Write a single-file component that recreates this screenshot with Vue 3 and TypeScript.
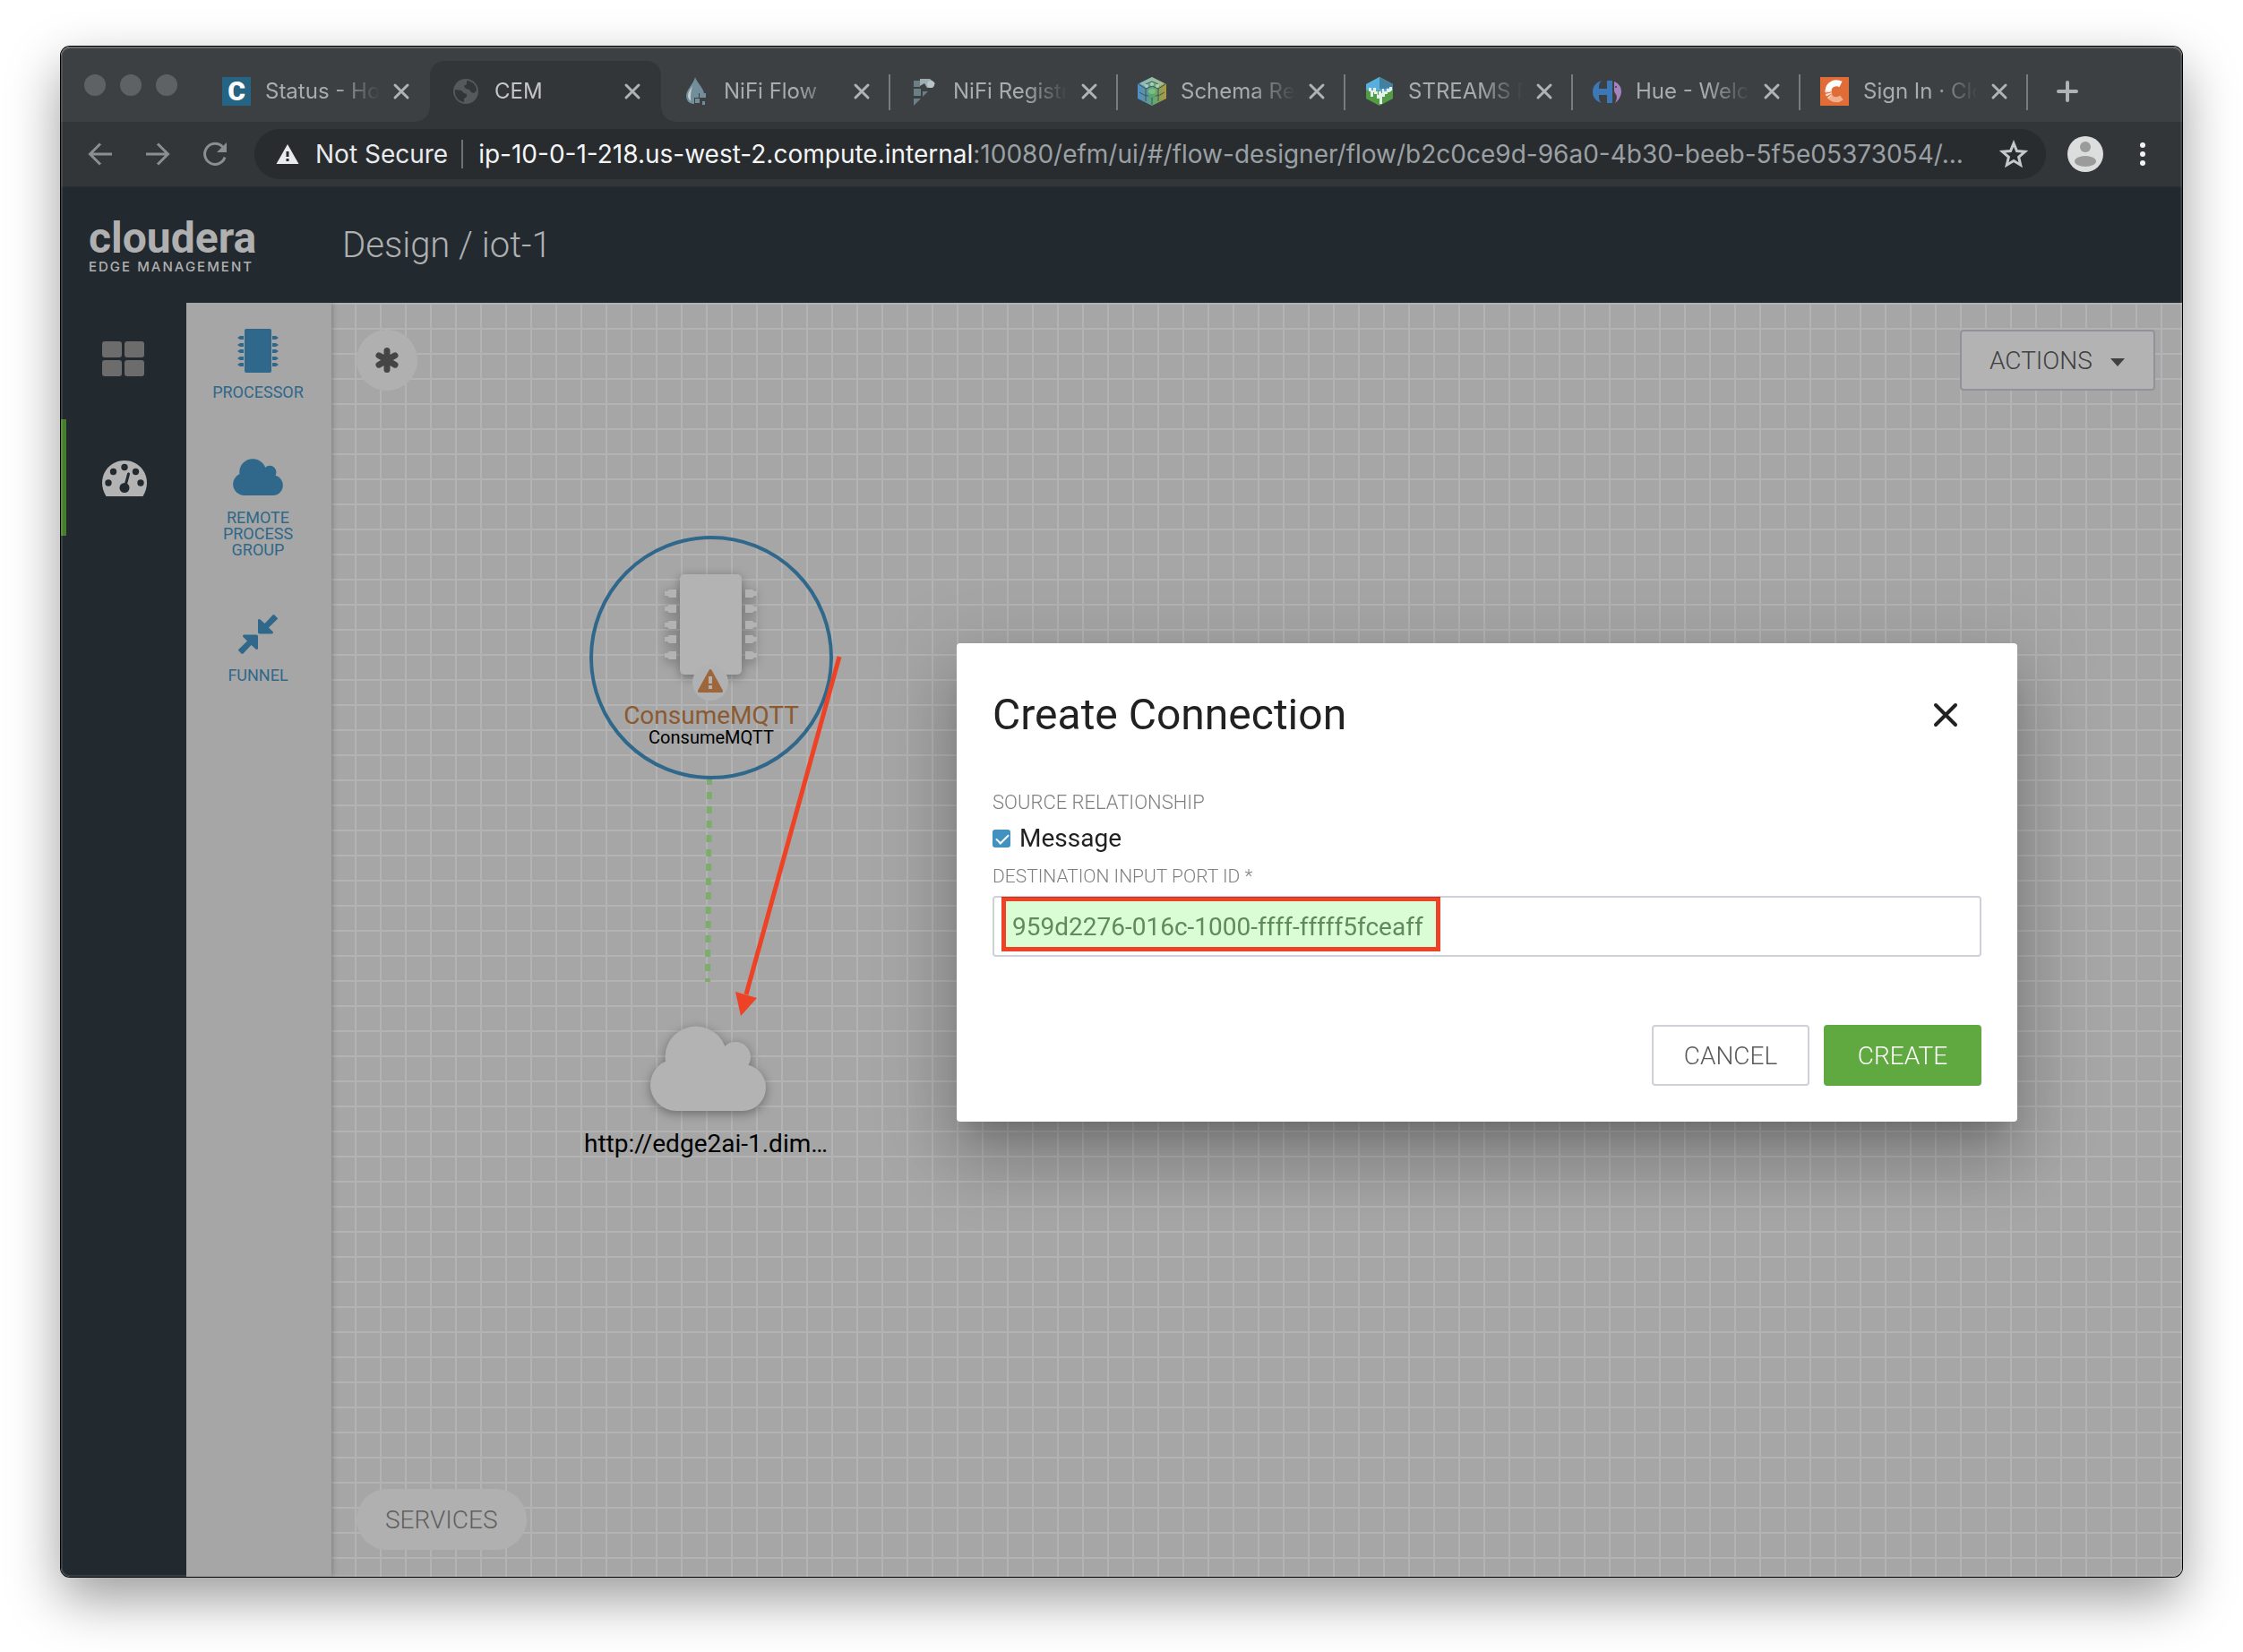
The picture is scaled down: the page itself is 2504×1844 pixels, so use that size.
<script setup lang="ts">
import { ref } from 'vue'

interface Tab {
  id: string
  title: string
  active?: boolean
}

const tabs: Tab[] = [
  { id: 'status', title: 'Status - Home' },
  { id: 'cem', title: 'CEM', active: true },
  { id: 'nifi', title: 'NiFi Flow' },
  { id: 'registry', title: 'NiFi Registry' },
  { id: 'schema', title: 'Schema Registry' },
  { id: 'streams', title: 'STREAMS Messaging' },
  { id: 'hue', title: 'Hue - Welcome' },
  { id: 'signin', title: 'Sign In · Cloudera' },
]

const pinRows = [320, 337, 355, 371, 389]
const smallPins = [8, 16, 23, 31, 38]

const messageChecked = ref(true)
const portId = ref('959d2276-016c-1000-ffff-fffff5fceaff')
</script>

<template>
  <div class="desktop">
    <div class="window">
      <div class="tab-strip">
        <div class="lights"><i></i><i></i><i></i></div>
        <div v-for="tab in tabs" :key="tab.id" class="tab" :class="{ active: tab.active }">
          <span class="favicon">
            <span v-if="tab.id === 'status'" class="letter-icon">C</span>
            <svg v-else-if="tab.id === 'cem'" viewBox="0 0 32 32">
              <circle cx="16" cy="16" r="14" fill="#54595d" />
              <path d="M17 4c6 0 11 5 11 11l-3 3-3-1-2-3-4-1-2-3 3-2zM4 14l7 1 3 3 3 1v3l-3 2v4C8 27 4 22 4 17z" fill="#323639" />
            </svg>
            <svg v-else-if="tab.id === 'nifi'" viewBox="0 0 32 32">
              <path d="M16 0c2 6 9 12 10 18h-6v5h-5v7C9 30 6 26 6 21 6 14 14 8 16 0z" fill="#728e9b" />
              <path d="M15 6c-2 6-7 9-7 15 0 2 1 4 3 6 0-8 0-13 4-21z" fill="#c3ccd1" />
              <path d="M21 18h7v5h-7zM16 24h5v5h-5zM24 27h3v4h-3z" fill="#728e9b" />
            </svg>
            <svg v-else-if="tab.id === 'registry'" viewBox="0 0 32 32">
              <path d="M4 4h7v7H4zM4 13h8v8H4zM4 24h8l-8 8zM14 16h6l-6 6z" fill="#6a7f86" />
              <path d="M11 2h11l6 5-3 5h-6l-3-5-5 3z" fill="#9eadb2" />
              <circle cx="23" cy="8" r="4" fill="#b9c4c8" />
            </svg>
            <svg v-else-if="tab.id === 'schema'" viewBox="0 0 32 32">
              <defs>
                <linearGradient id="hive" x1="0" x2="1" y1="0" y2="0">
                  <stop offset="0" stop-color="#4f8fc9" />
                  <stop offset="0.3" stop-color="#5b95a0" />
                  <stop offset="0.55" stop-color="#5fa873" />
                  <stop offset="0.75" stop-color="#86a05a" />
                  <stop offset="1" stop-color="#b3993c" />
                </linearGradient>
              </defs>
              <path d="M16 0l16 8v16l-16 8-16-8V8z" fill="url(#hive)" />
              <path d="M16 0l14 7-5 3-9-4-9 4-5-3z" fill="#a9c9b6" opacity="0.7" />
              <path d="M1 8l8 5v14M31 8l-8 5v14M9 13l7-3 7 3M9 20l7 3 7-3M2 17l7 4M30 17l-7 4M9 8l7-3 7 3M16 23v8" fill="none" stroke="#3a5558" stroke-width="1" />
              <g fill="#c4dfce" opacity="0.75">
                <circle cx="16" cy="8" r="2" /><circle cx="10" cy="10" r="2" /><circle cx="22" cy="10" r="2" />
              </g>
              <ellipse cx="16" cy="16" rx="4" ry="3" fill="#77bd86" /><ellipse cx="16" cy="21" rx="4" ry="2" fill="#57a56c" />
            </svg>
            <svg v-else-if="tab.id === 'streams'" viewBox="0 0 32 32">
              <path d="M16 0l15 8v16l-15 8-15-8V8z" fill="#539c46" />
              <path d="M16 0l15 8v6l-5 1-4 2-7-2-7 2-7-3V8z" fill="#58afdf" />
              <path d="M16 0l15 8v5l-6-1-4 2-5-1z" fill="#437f9f" />
              <path d="M4 12h3v3h2v-3h3v4h2v4h1v-4h3v2h1v-5h2v3h3v-3h3v-2h3v4l-3 2h-2v2h-3v3h-3v8h-3v-6h-3v-5h-3v-2H9v5H6v-6H4z" fill="#e4f0ea" />
            </svg>
            <svg v-else-if="tab.id === 'hue'" viewBox="0 0 32 32">
              <path d="M10 4C3 6 0 11 0 16.500S3 27 10 29c-3-3-3-5-3-9h9v9h6V4h-6v9H7c0-4 0-6 3-9z" fill="#3c78b8" />
              <path d="M24 5c5 2 8 6 8 11s-3 10-7 13c2-4 3-8 0-11l-1-2z" fill="#a583bd" />
              <circle cx="26" cy="11" r="1" fill="#3c4043" />
            </svg>
            <svg v-else viewBox="0 0 32 32">
              <rect width="32" height="32" fill="#e06c37" />
              <path d="M23 8C17 5 9 8 9 16" fill="none" stroke="#fff" stroke-width="7" />
              <path d="M9 15c0 3 1 6 3 7" fill="none" stroke="#fbe3d6" stroke-width="7" stroke-dasharray="2 1" />
              <path d="M11 22c3 4 9 4 13 1" fill="none" stroke="#f1b08d" stroke-width="6" />
            </svg>
          </span>
          <span class="tab-title">{{ tab.title }}</span>
          <button class="tab-close" :aria-label="`Close ${tab.title}`">
            <svg viewBox="0 0 24 24"><path d="M5 5l14 14M19 5L5 19" /></svg>
          </button>
        </div>
        <button class="new-tab" aria-label="New tab">
          <svg viewBox="0 0 28 28"><path d="M14 4v20M4 14h20" /></svg>
        </button>
      </div>

      <div class="toolbar">
        <button class="tool-icon" aria-label="Back">
          <svg viewBox="0 0 32 32"><path d="M29 16H5M16 4.500L4.500 16 16 27.500" /></svg>
        </button>
        <button class="tool-icon" aria-label="Forward">
          <svg viewBox="0 0 32 32"><path d="M3 16h24M16 4.500L27.500 16 16 27.500" /></svg>
        </button>
        <button class="tool-icon" aria-label="Reload">
          <svg viewBox="0 0 32 32">
            <path d="M27 19.500A11.500 11.500 0 1 1 24.500 8" />
            <path d="M29 3v11H18z" class="solid" />
          </svg>
        </button>
        <div class="address">
          <svg class="warn" viewBox="0 0 26 24">
            <path d="M13 1l12.500 22H.5z" fill="#e8eaed" />
            <path d="M13 9v6M13 17v3" stroke="#292c2f" stroke-width="3" />
          </svg>
          <span class="secure">Not Secure</span>
          <span class="divider"></span>
          <span class="url"><b>ip-10-0-1-218.us-west-2.compute.internal</b>:10080/efm/ui/#/flow-designer/flow/b2c0ce9d-96a0-4b30-beeb-5f5e05373054/...</span>
          <button class="star" aria-label="Bookmark">
            <svg viewBox="0 0 32 32"><path d="M16 4l3.500 8.500 9 .8-6.900 6 2.100 8.900L16 23.500l-7.700 4.700 2.100-8.900-6.900-6 9-.8z" /></svg>
          </button>
        </div>
        <button class="avatar" aria-label="Profile">
          <svg viewBox="0 0 40 40">
            <circle cx="20" cy="20" r="20" fill="#dcdddd" />
            <circle cx="20" cy="12" r="6" fill="#9b9b9b" />
            <ellipse cx="20" cy="28" rx="12" ry="6" fill="#9b9b9b" />
          </svg>
        </button>
        <button class="kebab" aria-label="Menu">
          <svg viewBox="0 0 8 28"><circle cx="4" cy="4" r="3" /><circle cx="4" cy="14" r="3" /><circle cx="4" cy="24" r="3" /></svg>
        </button>
      </div>

      <header class="app-header">
        <div class="brand">
          <span class="brand-name">cloudera</span>
          <span class="brand-sub">EDGE MANAGEMENT</span>
        </div>
        <h1>Design / iot-1</h1>
      </header>

      <div class="body">
        <nav class="side-nav">
          <a href="#" class="nav-item" aria-label="Dashboard">
            <svg width="48" height="40" viewBox="0 0 48 40" fill="#6c6c6c">
              <rect x="0" y="0" width="22" height="18" rx="3" /><rect x="25" y="0" width="22" height="18" rx="3" />
              <rect x="0" y="21" width="22" height="18" rx="3" /><rect x="25" y="21" width="22" height="18" rx="3" />
            </svg>
          </a>
          <a href="#" class="nav-item current" aria-label="Designer">
            <svg width="50" height="40" viewBox="0 0 50 40">
              <path d="M25 0C11 0 0 11 0 25c0 5 1.500 10 4.500 15h41C48.500 35 50 30 50 25 50 11 39 0 25 0z" fill="#b3b3b3" />
              <g fill="#222a30">
                <circle cx="7" cy="25" r="3.700" /><circle cx="12.500" cy="12.500" r="3.700" /><circle cx="25" cy="7.500" r="3.700" />
                <circle cx="37.500" cy="12.500" r="3.700" /><circle cx="43" cy="25" r="3.700" /><circle cx="25" cy="30.500" r="5.500" />
              </g>
              <path d="M26 28l3.500-13" stroke="#222a30" stroke-width="3" stroke-linecap="round" />
            </svg>
          </a>
        </nav>

        <aside class="palette">
          <button class="tool">
            <span class="tool-art">
              <svg width="46" height="50" viewBox="0 0 46 50" fill="#2f688a">
                <rect x="8" y="0" width="30" height="49" rx="2" />
                <path v-for="y in smallPins" :key="y" :d="`M7 ${y}H3L0 ${y + 2}l3 2h4zM39 ${y}h4l3 2-3 2h-4z`" />
              </svg>
            </span>
            <span>PROCESSOR</span>
          </button>
          <button class="tool">
            <span class="tool-art">
              <svg width="56" height="41" viewBox="0 0 129 95" fill="#2f688a">
                <circle cx="51" cy="35" r="34.500" /><circle cx="29" cy="66" r="29" /><circle cx="95" cy="35" r="17" />
                <circle cx="103" cy="69" r="26" /><rect x="29" y="40" width="74" height="55" />
              </svg>
            </span>
            <span>REMOTE PROCESS GROUP</span>
          </button>
          <button class="tool">
            <span class="tool-art">
              <svg width="44" height="44" viewBox="0 0 44 44" fill="#2f688a">
                <path d="M22 6.500c0-1.500 1.500-2 2.500-1l5 4.500 9-9.500c.8-.8 1.500-.5 2 0l3 3c.6.600.6 1.200 0 1.800l-9.500 9.200 4.500 4.500c1 1 .3 2.500-1 2.500H24c-1.300 0-2-.7-2-2z" />
                <path d="M22 37.500c0 1.500-1.500 2-2.500 1l-5-4.500-9 9.500c-.8.800-1.500.5-2 0l-3-3c-.6-.6-.6-1.200 0-1.800L10 29.500 5.500 25c-1-1-.3-2.500 1-2.500H20c1.300 0 2 .7 2 2z" />
              </svg>
            </span>
            <span>FUNNEL</span>
          </button>
        </aside>

        <main class="canvas">
          <svg class="diagram">
            <line x1="422" y1="530" x2="420" y2="758" stroke="#7eac6e" stroke-width="6" stroke-dasharray="8 8" />
            <circle cx="424" cy="396" r="134" fill="none" stroke="#2f688a" stroke-width="4" />
            <g class="raised">
              <rect x="389" y="303" width="69" height="112" rx="5" />
              <path v-for="y in pinRows" :key="y" :d="`M385 ${y}h-8l-2 2h-3v5h3l2 2h8zM462 ${y}h8l2 2h3v5h-3l-2 2h-8z`" />
            </g>
            <circle cx="423" cy="424" r="20" fill="#afb1b2" />
            <path d="M421.500 410c.8-1.300 2.200-1.300 3 0l12.300 22.500c.7 1.300 0 2.500-1.500 2.500h-24.600c-1.500 0-2.200-1.200-1.500-2.500z" fill="#9f663a" />
            <path d="M423 417v8M423 427v4" stroke="#b3b3b3" stroke-width="4" />
            <text x="424" y="470" class="node-title warn-text">ConsumeMQTT</text>
            <text x="424" y="492" class="node-type">ConsumeMQTT</text>

            <g class="raised">
              <circle cx="407" cy="842" r="34.500" /><circle cx="385" cy="873" r="29" /><circle cx="451" cy="842" r="17" />
              <circle cx="459" cy="876" r="26" /><rect x="385" y="847" width="74" height="55" />
            </g>
            <text x="418" y="948" class="node-title">http://edge2ai-1.dim…</text>

            <path d="M567 395L463 772" stroke="#ee4226" stroke-width="5" />
            <path d="M457 796l-6-27 24 7z" fill="#ee4226" />
          </svg>

          <div class="canvas-row">
            <button class="round" aria-label="Configuration">
              <svg width="28" height="28" viewBox="0 0 28 28"><path d="M14 3.500v21M5 8.800l18 10.400M23 8.800L5 19.200" /></svg>
            </button>
            <button class="btn actions">ACTIONS<i class="caret"></i></button>
          </div>
          <button class="services">SERVICES</button>
        </main>
      </div>

      <form class="dialog" role="dialog" aria-labelledby="dialog-title" @submit.prevent>
        <div class="dialog-head">
          <h2 id="dialog-title">Create Connection</h2>
          <button type="button" class="dialog-close" aria-label="Close">
            <svg width="30" height="30" viewBox="0 0 30 30"><path d="M4 4l22 22M26 4L4 26" /></svg>
          </button>
        </div>
        <span class="field-label">SOURCE RELATIONSHIP</span>
        <label class="check"><input v-model="messageChecked" type="checkbox" />Message</label>
        <label class="field-label port-label" for="port">DESTINATION INPUT PORT ID *</label>
        <div class="field">
          <input id="port" v-model="portId" type="text" />
          <span class="marker"></span>
        </div>
        <div class="dialog-foot">
          <button type="button" class="btn">CANCEL</button>
          <button type="submit" class="btn primary">CREATE</button>
        </div>
      </form>
    </div>
  </div>
</template>

<style>
body {
  margin: 0;
  background: #fff;
}
</style>

<style scoped>
* {
  box-sizing: border-box;
}
button {
  margin: 0;
  padding: 0;
  border: 0;
  background: none;
  font: inherit;
  color: inherit;
  cursor: pointer;
}
svg {
  display: block;
}
.desktop {
  display: flex;
  min-height: 100vh;
  padding: 52px 68px 84px;
  font-family: Roboto, "Liberation Sans", sans-serif;
}
.window {
  position: relative;
  flex: 1;
  min-width: 0;
  display: flex;
  flex-direction: column;
  border-radius: 10px;
  box-shadow: 0 0 0 1px #000, 0 24px 60px rgba(0, 0, 0, 0.4);
}
.window::after {
  content: "";
  position: absolute;
  inset: 0;
  border-radius: 10px;
  box-shadow: inset 0 0 0 2px rgba(255, 255, 255, 0.1), inset 0 2px 0 rgba(255, 255, 255, 0.14);
  pointer-events: none;
}

/* Browser chrome */
.tab-strip {
  display: flex;
  align-items: flex-end;
  height: 84px;
  background: #3c4043;
  border-radius: 10px 10px 0 0;
  font: 400 24px Inter, "Liberation Sans", sans-serif;
  color: #a9acae;
}
.lights {
  display: flex;
  gap: 16px;
  width: 158px;
  padding-left: 26px;
  align-self: flex-start;
  margin-top: 31px;
}
.lights i {
  width: 24px;
  height: 24px;
  border-radius: 50%;
  background: #5e6265;
}
.tab {
  position: relative;
  display: flex;
  align-items: center;
  width: 254px;
  height: 68px;
  padding: 0 20px 0 22px;
}
.tab.active {
  width: 258px;
  padding-left: 24px;
  background: #323639;
  border-radius: 16px 16px 0 0;
  color: #c3c5c7;
}
.tab.active + .tab {
  width: 256px;
}
.tab.active ~ .tab::after {
  content: "";
  position: absolute;
  right: 0;
  top: 15px;
  width: 2px;
  height: 40px;
  background: #797c7e;
}
.tab.active::before,
.tab.active::after {
  content: "";
  position: absolute;
  bottom: 0;
  width: 16px;
  height: 16px;
}
.tab.active::before {
  right: 100%;
  background: radial-gradient(circle at 0 0, #3c4043 15px, #323639 16px);
}
.tab.active::after {
  left: 100%;
  background: radial-gradient(circle at 100% 0, #3c4043 15px, #323639 16px);
}
.favicon {
  flex: none;
  width: 32px;
  height: 32px;
  margin-right: 16px;
}
.letter-icon {
  display: block;
  background: #256482;
  color: #fff;
  font: 900 30px/32px Roboto, sans-serif;
  text-align: center;
}
.tab-title {
  flex: 1;
  min-width: 0;
  margin-right: 12px;
  overflow: hidden;
  white-space: nowrap;
  line-height: 32px;
  mask-image: linear-gradient(to right, #000 calc(100% - 48px), transparent 100%);
}
.tab-close svg {
  width: 24px;
  height: 24px;
}
.tab-close path,
.new-tab path {
  fill: none;
  stroke: #b0b3b5;
  stroke-width: 3;
  stroke-linecap: round;
}
.new-tab {
  align-self: center;
  margin: 16px 0 0 30px;
}
.new-tab svg {
  width: 28px;
  height: 28px;
}
.new-tab path {
  stroke-width: 4;
}
.toolbar {
  display: flex;
  align-items: center;
  height: 73px;
  padding: 0 40px 0 28px;
  background: #323639;
  border-bottom: 1px solid #2a2e31;
}
.tool-icon {
  margin-right: 32px;
}
.tool-icon svg,
.star svg {
  width: 32px;
  height: 32px;
}
.tool-icon path {
  fill: none;
  stroke: #8b8e90;
  stroke-width: 3;
}
.tool-icon .solid {
  fill: #8b8e90;
  stroke: none;
}
.address {
  flex: 1;
  min-width: 0;
  display: flex;
  align-items: center;
  height: 56px;
  margin-right: 24px;
  padding: 0 20px 0 24px;
  border-radius: 28px;
  background: #292c2f;
  color: #e8eaed;
  font: 400 28px/34px Inter, "Liberation Sans", sans-serif;
}
.tool-icon + .address {
  margin-left: -4px;
}
.warn {
  width: 26px;
  height: 24px;
  margin-right: 18px;
}
.divider {
  width: 2px;
  height: 32px;
  margin: 0 17px 0 15px;
  background: #6e7173;
}
.url {
  flex: 1;
  min-width: 0;
  overflow: hidden;
  white-space: nowrap;
  color: #9aa0a3;
}
.url b {
  font-weight: 400;
  color: #f4f5f6;
}
.star path {
  fill: none;
  stroke: #c5c8ca;
  stroke-width: 3;
}
.avatar {
  margin-right: 40px;
}
.avatar svg {
  width: 40px;
  height: 40px;
}
.kebab svg {
  width: 8px;
  height: 28px;
  fill: #f1f3f4;
}

/* Application */
.app-header {
  display: flex;
  align-items: center;
  height: 129px;
  background: #222a30;
  color: #b0b0b0;
}
.brand {
  display: flex;
  flex-direction: column;
  width: 314px;
  padding-left: 31px;
}
.brand-name {
  font-size: 48px;
  font-weight: 700;
  line-height: 48px;
}
.brand-sub {
  font: 500 15px/16px Inter, sans-serif;
  letter-spacing: 2px;
}
h1 {
  margin: 0;
  font-size: 40px;
  font-weight: 300;
  line-height: 48px;
}
.body {
  flex: 1;
  display: flex;
}
.side-nav {
  width: 140px;
  background: #222a30;
  border-radius: 0 0 0 10px;
}
.nav-item {
  display: flex;
  align-items: center;
  height: 130px;
  padding-left: 46px;
  padding-bottom: 4px;
}
.nav-item.current {
  padding: 2px 0 0 40px;
  border-left: 6px solid #477e2e;
}
.palette {
  position: relative;
  z-index: 1;
  width: 162px;
  display: flex;
  flex-direction: column;
  align-items: center;
  gap: 60px;
  padding: 29px 2px 0 0;
  background: #a6a6a6;
  box-shadow: 1px 0 6px rgba(0, 0, 0, 0.25);
  clip-path: inset(0 -8px 0 0);
}
.tool {
  width: 112px;
  color: #2f688a;
  font-size: 18px;
  line-height: 18px;
}
.tool-art {
  display: flex;
  align-items: center;
  justify-content: center;
  height: 50px;
  margin-bottom: 12px;
}
.canvas {
  position: relative;
  flex: 1;
  min-width: 0;
  display: flex;
  flex-direction: column;
  justify-content: space-between;
  align-items: flex-start;
  padding: 30px 30px 30px 28px;
  border-radius: 0 0 10px 0;
  background-color: #a6a6a6;
  background-image: linear-gradient(#b3b3b3 2px, transparent 2px), linear-gradient(to right, #b3b3b3 2px, transparent 2px);
  background-size: 28px 28px;
  background-position: -2px 0;
}
.diagram {
  position: absolute;
  left: 0;
  top: 0;
  width: 100%;
  height: 100%;
}
.raised {
  fill: #b3b3b3;
  filter: drop-shadow(0 3px 6px rgba(0, 0, 0, 0.35));
}
.node-title,
.node-type {
  font-size: 28px;
  text-anchor: middle;
  fill: #000;
}
.node-type {
  font-size: 20px;
}
.warn-text {
  fill: #8c5a31;
}
.canvas-row {
  position: relative;
  align-self: stretch;
  display: flex;
  justify-content: space-between;
}
.round {
  display: grid;
  place-items: center;
  width: 68px;
  height: 68px;
  border-radius: 50%;
  background: #b0b0b0;
}
.round path {
  fill: none;
  stroke: #454545;
  stroke-width: 7;
  stroke-linecap: round;
}
.btn {
  width: 176px;
  height: 68px;
  border: 2px solid #ced1d7;
  border-radius: 4px;
  font-size: 28px;
  font-weight: 300;
  color: #5a5a5a;
}
.actions {
  display: flex;
  align-items: center;
  justify-content: space-between;
  width: 218px;
  padding: 0 32px 0 31px;
  border-color: #909498;
  background: #b3b3b3;
  color: #404040;
}
.caret {
  margin-top: 4px;
  border: 8px solid transparent;
  border-top: 9px solid #404040;
  border-bottom: 0;
}
.services {
  position: relative;
  height: 68px;
  padding: 0 32px;
  border-radius: 34px;
  background: #b0b0b0;
  color: #5f5f5f;
  font-size: 28px;
  font-weight: 300;
}

/* Dialog, dragged away from the centre of the window */
.dialog {
  position: absolute;
  top: 666px;
  right: 184px;
  z-index: 2;
  width: 50%;
  display: flex;
  flex-direction: column;
  padding: 40px;
  border-radius: 4px;
  background: #fff;
  color: #212121;
  box-shadow: 0 22px 30px -14px rgba(0, 0, 0, 0.2), 0 48px 76px 6px rgba(0, 0, 0, 0.14), 0 18px 92px 16px rgba(0, 0, 0, 0.12);
}
.dialog-head {
  display: flex;
  align-items: center;
  justify-content: space-between;
  height: 80px;
  margin-bottom: 44px;
}
h2 {
  margin: 0;
  font-size: 48px;
  font-weight: 400;
  line-height: 56px;
}
.dialog-close {
  display: grid;
  place-items: center;
  width: 80px;
  height: 80px;
}
.dialog-close path {
  stroke: #212121;
  stroke-width: 4;
  stroke-linecap: round;
}
.field-label {
  margin-bottom: 8px;
  font-size: 22px;
  font-weight: 300;
  line-height: 28px;
  color: #808080;
}
.port-label {
  font-size: 21px;
}
.check {
  display: flex;
  align-items: center;
  gap: 10px;
  margin-bottom: 10px;
  font-size: 28px;
  line-height: 36px;
}
.check input {
  appearance: none;
  width: 20px;
  height: 20px;
  margin: 0;
  border-radius: 3px;
  border: 2px solid #4191c1;
}
.check input:checked {
  background: #4191c1;
}
.check input:checked::before {
  content: "";
  display: block;
  width: 12px;
  height: 6px;
  margin: 3px 0 0 2px;
  border: solid #fff;
  border-width: 0 0 2px 2px;
  transform: rotate(-45deg);
}
.field {
  position: relative;
}
.field input {
  display: block;
  width: 100%;
  height: 68px;
  padding: 0 20px;
  border: 2px solid #ced1d7;
  border-radius: 4px;
  background: #fff;
  font: 400 28px Roboto, sans-serif;
  color: #6f8b6d;
}
.marker {
  position: absolute;
  left: 10px;
  top: 1px;
  width: 490px;
  height: 61px;
  border: 5px solid #ee4226;
  background: #dafdd5;
  mix-blend-mode: multiply;
  pointer-events: none;
}
.dialog-foot {
  display: flex;
  justify-content: flex-end;
  gap: 16px;
  margin-top: 76px;
}
.primary {
  border-color: #60a840;
  background: #60a840;
  color: #fff;
}
</style>
